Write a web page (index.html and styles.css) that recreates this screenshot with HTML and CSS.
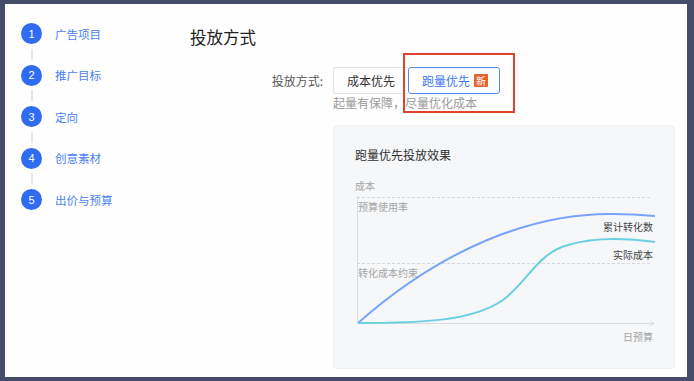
FILE: index.html
```html
<!DOCTYPE html>
<html lang="zh-CN">
<head>
<meta charset="utf-8">
<link rel="stylesheet" href="styles.css">
</head>
<body>
<div class="panel">
  <aside class="steps">
    <div class="step"><span class="num">1</span><span class="step-label">广告项目</span></div>
    <div class="link"><i></i></div>
    <div class="step"><span class="num">2</span><span class="step-label">推广目标</span></div>
    <div class="link"><i></i></div>
    <div class="step"><span class="num">3</span><span class="step-label">定向</span></div>
    <div class="link"><i></i></div>
    <div class="step"><span class="num">4</span><span class="step-label">创意素材</span></div>
    <div class="link"><i></i></div>
    <div class="step"><span class="num">5</span><span class="step-label">出价与预算</span></div>
  </aside>
  <main class="main">
    <h1 class="title">投放方式</h1>
    <div class="form">
      <div class="form-label">投放方式:</div>
      <div class="form-body">
        <div class="seg">
          <div class="seg-btn">成本优先</div>
          <div class="seg-btn active">跑量优先<span class="badge">新</span></div>
        </div>
        <div class="hint">起量有保障，尽量优化成本</div>
        <div class="card">
          <div class="card-title">跑量优先投放效果</div>
          <svg class="chart" width="342" height="205" viewBox="0 0 342 205">
            <text class="lbl-grey" x="22" y="22">成本</text>
            <line x1="24.5" y1="33" x2="24.5" y2="160" class="axis"/>
            <line x1="24" y1="34.5" x2="319" y2="34.5" class="dash"/>
            <line x1="24" y1="100.5" x2="319" y2="100.5" class="dash"/>
            <line x1="24" y1="160.5" x2="320" y2="160.5" class="axis"/>
            <path d="M317 158 L321 160.5 L317 163" class="axis" fill="none"/>
            <text class="lbl-grey" x="25" y="43">预算使用率</text>
            <text class="lbl-grey" x="25" y="109">转化成本约束</text>
            <text class="lbl-grey end" x="320" y="173">日预算</text>
            <path d="M25 160 C110 85 200 50 280 51 Q300 51 322 53" class="blue"/>
            <path d="M25 160 C90 160 140 158 170 137 C195 118 205 90 235 82 C255 76 285 74 322 79" class="cyan"/>
            <text class="lbl-dark end" x="320" y="63">累计转化数</text>
            <text class="lbl-dark end" x="320" y="91">实际成本</text>
          </svg>
        </div>
      </div>
    </div>
    <div class="highlight"></div>
  </main>
</div>
</body>
</html>
```

FILE: styles.css
```css
* { box-sizing: border-box; }
html, body { margin: 0; padding: 0; }
body {
  background: #444c6a;
  width: 694px;
  height: 381px;
  overflow: hidden;
  font-family: "Noto Sans CJK SC", "Noto Sans", sans-serif;
}
.panel {
  margin: 4px 7px 4px 5px;
  height: 373px;
  background: #fefefe;
  display: flex;
}
.steps {
  width: 185px;
  flex: none;
  padding: 19px 0 0 16px;
  display: flex;
  flex-direction: column;
}
.step {
  display: flex;
  align-items: center;
  height: 21px;
}
.num {
  width: 21px;
  height: 21px;
  border-radius: 50%;
  background: #2f6cf1;
  color: #fff;
  font-family: "Liberation Sans", Arial, sans-serif;
  font-size: 11px;
  display: flex;
  align-items: center;
  justify-content: center;
  flex: none;
}
.step-label {
  margin-left: 13px;
  font-size: 11.5px;
  color: #4b82f2;
  line-height: 16px;
}
.link {
  height: 20.5px;
  width: 21px;
  display: flex;
  align-items: center;
  justify-content: center;
}
.link i {
  display: block;
  width: 2px;
  height: 11px;
  background: #e3e5e9;
}
.main {
  flex: 1;
  position: relative;
  padding-top: 21px;
}
.title {
  margin: 0;
  font-size: 16.5px;
  font-weight: 400;
  line-height: 24px;
  color: #222;
}
.form {
  margin-top: 18px;
  display: grid;
  grid-template-columns: 143px 342px;
}
.form-label {
  padding-right: 10px;
  text-align: right;
  font-size: 12px;
  line-height: 27px;
  color: #555;
}
.seg { display: flex; height: 27px; }
.seg-btn {
  flex: none;
  white-space: nowrap;
  height: 27px;
  display: flex;
  align-items: center;
  font-size: 12px;
  color: #333;
  border: 1px solid #dfe2e8;
  padding: 0 13px;
}
.seg-btn:first-child {
  width: 75px;
  border-radius: 3px 0 0 3px;
  border-right: none;
}
.seg-btn.active {
  width: 92px;
  padding: 0 8px 0 13px;
  color: #3d78f0;
  border: 1px solid #5588f2;
  border-radius: 3px;
}
.badge {
  flex: none;
  margin-left: 4px;
  width: 14px;
  height: 13px;
  background: #e8622d;
  color: #fff;
  font-size: 10px;
  line-height: 13px;
  text-align: center;
  border-radius: 1px;
}
.hint {
  margin-top: 1px;
  font-size: 12px;
  line-height: 16px;
  color: #9a9a9a;
}
.card {
  margin-top: 14px;
  width: 342px;
  height: 244px;
  background: #f6f7f9;
  border: 1px solid #eef0f3;
  border-radius: 4px;
  padding-top: 21px;
}
.card-title {
  padding-left: 21px;
  font-size: 12px;
  line-height: 16px;
  color: #2e2e2e;
}
.chart { display: block; margin-left: -1px; }
.chart text {
  font-family: "Noto Sans CJK SC", "Noto Sans", sans-serif;
  font-size: 10px;
  dominant-baseline: central;
}
.chart .end { text-anchor: end; }
.lbl-grey { fill: #a3a3a3; }
.lbl-dark { fill: #444; }
.axis { stroke: #d8dbe1; stroke-width: 1; }
.dash { stroke: #d3d6dc; stroke-width: 1; stroke-dasharray: 3 2; }
.blue { fill: none; stroke: #79a3fb; stroke-width: 2; }
.cyan { fill: none; stroke: #68d0df; stroke-width: 2; }
.highlight {
  position: absolute;
  left: 213px;
  top: 49px;
  width: 112px;
  height: 60px;
  border: 2px solid #e2432f;
}
```
